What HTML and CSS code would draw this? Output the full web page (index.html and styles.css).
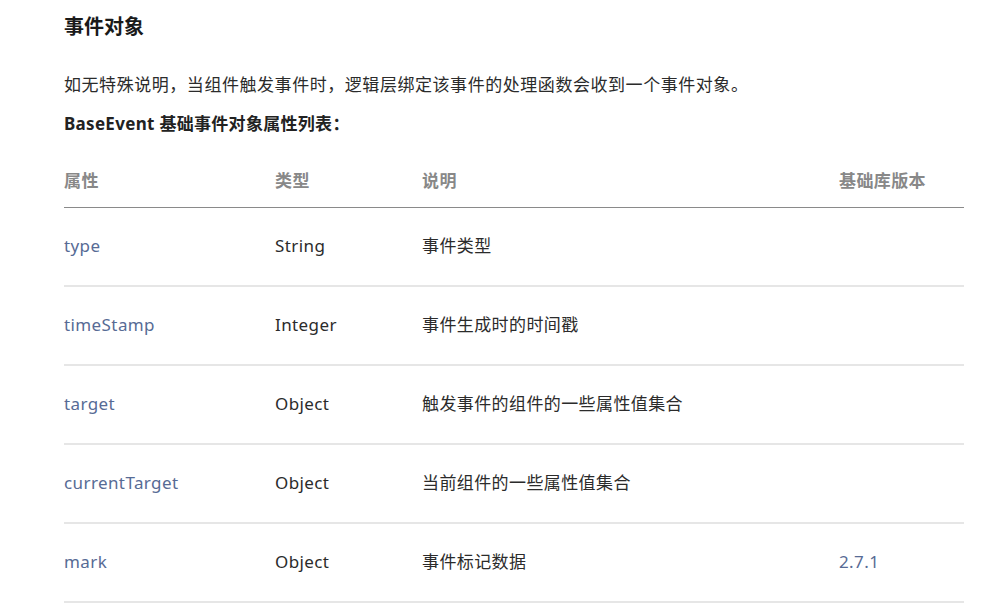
FILE: index.html
```html
<!DOCTYPE html>
<html lang="zh-CN">
<head>
<meta charset="utf-8">
<title>事件对象</title>
<link rel="stylesheet" href="styles.css">
</head>
<body>
<main class="doc">
  <h2 class="doc-title">事件对象</h2>
  <p class="doc-text">如无特殊说明，当组件触发事件时，逻辑层绑定该事件的处理函数会收到一个事件对象。</p>
  <p class="doc-strong">BaseEvent 基础事件对象属性列表：</p>
  <table class="prop-table">
    <thead>
      <tr>
        <th class="col-name">属性</th>
        <th class="col-type">类型</th>
        <th class="col-desc">说明</th>
        <th class="col-ver">基础库版本</th>
      </tr>
    </thead>
    <tbody>
      <tr><td class="name">type</td><td>String</td><td>事件类型</td><td class="ver"></td></tr>
      <tr><td class="name">timeStamp</td><td>Integer</td><td>事件生成时的时间戳</td><td class="ver"></td></tr>
      <tr><td class="name">target</td><td>Object</td><td>触发事件的组件的一些属性值集合</td><td class="ver"></td></tr>
      <tr><td class="name">currentTarget</td><td>Object</td><td>当前组件的一些属性值集合</td><td class="ver"></td></tr>
      <tr><td class="name">mark</td><td>Object</td><td>事件标记数据</td><td class="ver">2.7.1</td></tr>
    </tbody>
  </table>
</main>
</body>
</html>
```
FILE: styles.css
```css
html, body {
  margin: 0;
  padding: 0;
  background: #ffffff;
}
body {
  font-family: "Noto Sans", "Noto Sans CJK SC", "Liberation Sans", sans-serif;
  color: #333333;
}
.doc {
  width: 900px;
  padding: 13px 0 0 64px;
}
.doc-title {
  margin: 0;
  font-size: 20px;
  line-height: 28px;
  font-weight: 700;
  color: #1a1a1a;
}
.doc-text {
  margin: 31px 0 0;
  font-size: 17px;
  line-height: 26px;
  letter-spacing: 0.55px;
  color: #2b2b2b;
}
.doc-strong {
  margin: 13px 0 0;
  font-size: 17px;
  line-height: 26px;
  font-weight: 700;
  letter-spacing: 0.3px;
  color: #222222;
}
.prop-table {
  width: 900px;
  margin-top: 19px;
  border-collapse: collapse;
  table-layout: fixed;
  font-size: 17px;
  letter-spacing: 0.4px;
}
.prop-table th {
  text-align: left;
  font-weight: 700;
  color: #888888;
  line-height: 26px;
  padding: 12px 0 13px;
  border-bottom: 1px solid #8a8a8a;
}
.col-name { width: 211px; }
.col-type { width: 147px; }
.col-desc { width: 417px; }
.col-ver { width: 125px; }
.prop-table td {
  line-height: 26px;
  padding: 25px 0 26px;
  border-bottom: 2px solid #e6e6e6;
  color: #2b2b2b;
  vertical-align: middle;
}
.prop-table td.name,
.prop-table td.ver {
  color: #576b95;
}
```
